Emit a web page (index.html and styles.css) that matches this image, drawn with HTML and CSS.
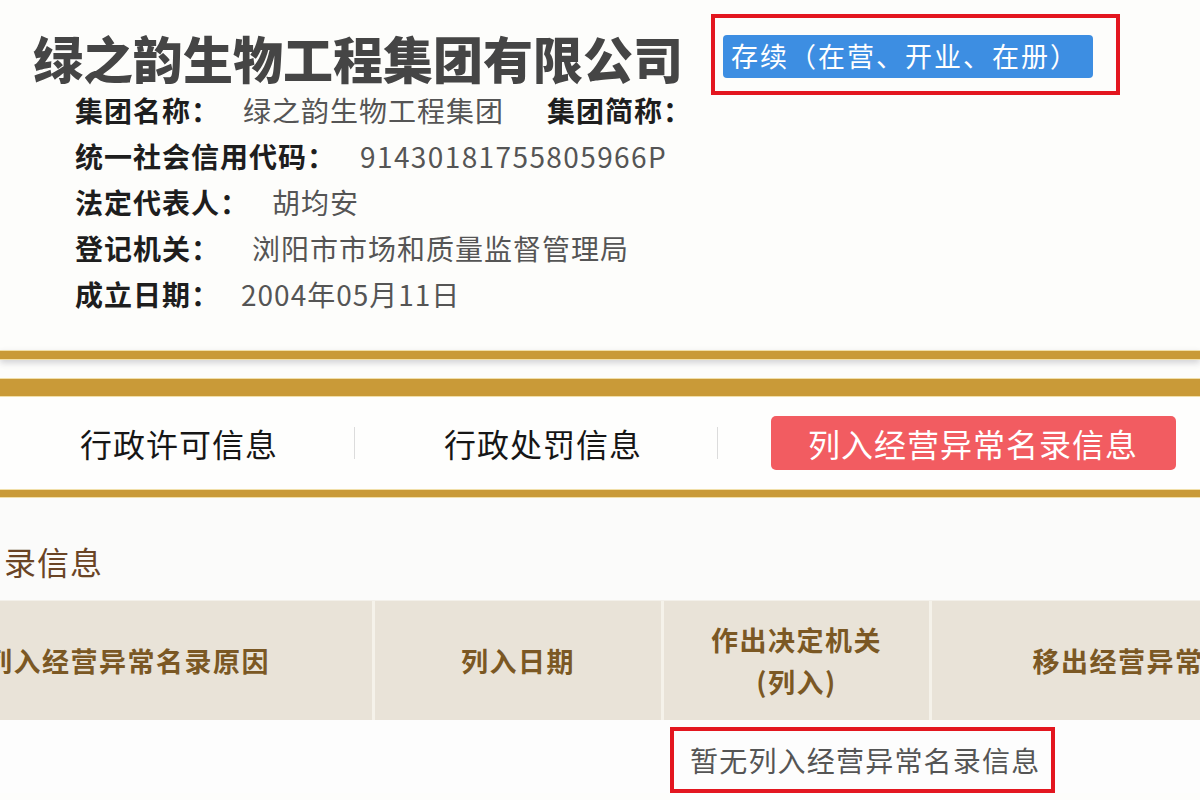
FILE: index.html
```html
<!DOCTYPE html>
<html lang="zh-CN">
<head>
<meta charset="utf-8">
<title>绿之韵生物工程集团有限公司</title>
<link rel="stylesheet" href="styles.css">
</head>
<body>
<div class="page">
  <header class="top">
    <div class="title-row">
      <h1 class="company">绿之韵生物工程集团有限公司</h1>
      <div class="mark mark-status">
        <span class="badge">存续（在营、开业、在册）</span>
      </div>
    </div>
    <ul class="info">
      <li class="row"><span class="label">集团名称：</span><span class="value">绿之韵生物工程集团</span><span class="label label-second">集团简称：</span></li>
      <li class="row"><span class="label">统一社会信用代码：</span><span class="value value-code">91430181755805966P</span></li>
      <li class="row"><span class="label">法定代表人：</span><span class="value">胡均安</span></li>
      <li class="row"><span class="label">登记机关：</span><span class="value value-wide">浏阳市市场和质量监督管理局</span></li>
      <li class="row"><span class="label">成立日期：</span><span class="value value-narrow">2004年05月11日</span></li>
    </ul>
  </header>

  <div class="gold gold-thin"></div>
  <div class="gold gold-thick"></div>

  <nav class="tabs">
    <span class="tab tab-first">行政许可信息</span>
    <span class="sep"></span>
    <span class="tab tab-second">行政处罚信息</span>
    <span class="sep"></span>
    <span class="tab tab-active">列入经营异常名录信息</span>
  </nav>

  <div class="gold gold-bottom"></div>

  <section class="panel">
    <h2 class="panel-title">列入经营异常名录信息</h2>
    <div class="table-head">
      <div class="th">列入经营异常名录原因</div>
      <div class="th">列入日期</div>
      <div class="th th-two">作出决定机关<br>(列入)</div>
      <div class="th">移出经营异常名录原因</div>
    </div>
    <div class="table-body">
      <div class="mark mark-empty">暂无列入经营异常名录信息</div>
    </div>
  </section>
</div>
</body>
</html>
```
FILE: styles.css
```css
html, body {
  margin: 0;
  padding: 0;
  background: #fdfdfb;
}
body {
  width: 1200px;
  height: 800px;
  overflow: hidden;
  font-family: "Noto Sans CJK SC", "Noto Sans", sans-serif;
  color: #333;
}
.page {
  width: 1200px;
  height: 800px;
  overflow: hidden;
}

/* ---------- header ---------- */
.top {
  padding-top: 14px;
}
.title-row {
  display: flex;
  align-items: flex-start;
  padding-left: 33px;
}
.company {
  margin: 18px 0 0 0;
  font-size: 50px;
  line-height: 50px;
  font-weight: 900;
  color: #454545;
  letter-spacing: 0;
  white-space: nowrap;
}
.mark {
  border: 4px solid #e3161f;
  box-sizing: border-box;
}
.mark-status {
  margin-left: 28px;
  width: 409px;
  height: 81px;
  padding: 17px 0 0 8px;
}
.badge {
  display: block;
  width: 370px;
  height: 43px;
  line-height: 42px;
  background: #3d8ee2;
  border-radius: 4px;
  color: #fff;
  font-size: 27px;
  letter-spacing: 2px;
  padding-left: 8px;
  box-sizing: border-box;
  white-space: nowrap;
}

.info {
  list-style: none;
  margin: -8px 0 0 0;
  padding: 0 0 0 75px;
}
.row {
  display: flex;
  height: 46px;
  line-height: 46px;
  font-size: 28px;
  letter-spacing: 1px;
  white-space: nowrap;
}
.label {
  font-weight: 700;
  color: #1e1e1e;
}
.value {
  margin-left: 23px;
  color: #555;
  font-weight: 400;
}
.value-code {
  margin-left: 24px;
  letter-spacing: 1.4px;
}
.value-wide {
  margin-left: 32px;
}
.value-narrow {
  margin-left: 21px;
}
.label-second {
  margin-left: 43px;
}

/* ---------- gold rules ---------- */
.gold {
  background: #c99a38;
  border-top: 1px solid #f1dfa9;
  border-bottom: 1px solid #f1dfa9;
}
.gold-thin {
  margin-top: 33px;
  height: 8px;
  box-shadow: 0 3px 6px rgba(60, 60, 80, 0.22);
  position: relative;
}
.gold-thick {
  margin-top: 18px;
  height: 17px;
}
.gold-bottom {
  height: 7px;
}

/* ---------- tabs ---------- */
.tabs {
  display: flex;
  align-items: center;
  height: 92px;
  background: #fefefd;
  white-space: nowrap;
}
.tab {
  font-size: 32px;
  letter-spacing: 1px;
  color: #161616;
  line-height: 40px;
}
.tab-first {
  margin-left: 80px;
  margin-right: 76px;
}
.tab-second {
  margin-left: 89px;
  margin-right: 75px;
}
.sep {
  width: 1px;
  height: 32px;
  background: #dcdcdc;
}
.tab-active {
  margin-left: 53px;
  width: 405px;
  height: 54px;
  line-height: 54px;
  box-sizing: border-box;
  padding-left: 37px;
  background: #f25c61;
  color: #fff;
  border-radius: 5px;
}

/* ---------- panel ---------- */
.panel {
  background: #fbfbfa;
  padding-top: 40px;
}
.panel-title {
  margin: 0 0 0 -227px;
  font-size: 32px;
  line-height: 46px;
  font-weight: 400;
  letter-spacing: 1px;
  color: #6a4425;
  white-space: nowrap;
  padding-bottom: 16px;
}
.table-head {
  display: grid;
  grid-template-columns: 489px 286px 265px 486px 400px;
  column-gap: 3px;
  margin-left: -117px;
  width: 1940px;
  height: 120px;
  background: #f5f2ea;
  border-top: 1px solid #f3f0ea;
  box-sizing: border-box;
}
.th {
  display: flex;
  align-items: center;
  justify-content: center;
  text-align: center;
  background: #e9e3d8;
  color: #7b5824;
  font-size: 27px;
  font-weight: 700;
  letter-spacing: 1.5px;
  line-height: 42px;
  white-space: nowrap;
}
.table-body {
  padding: 7px 0 0 670px;
  height: 73px;
  box-sizing: border-box;
  background: #fdfdfd;
}
.mark-empty {
  width: 385px;
  height: 66px;
  line-height: 58px;
  padding-left: 16px;
  font-size: 28px;
  letter-spacing: 1.2px;
  color: #555;
  white-space: nowrap;
}
```
